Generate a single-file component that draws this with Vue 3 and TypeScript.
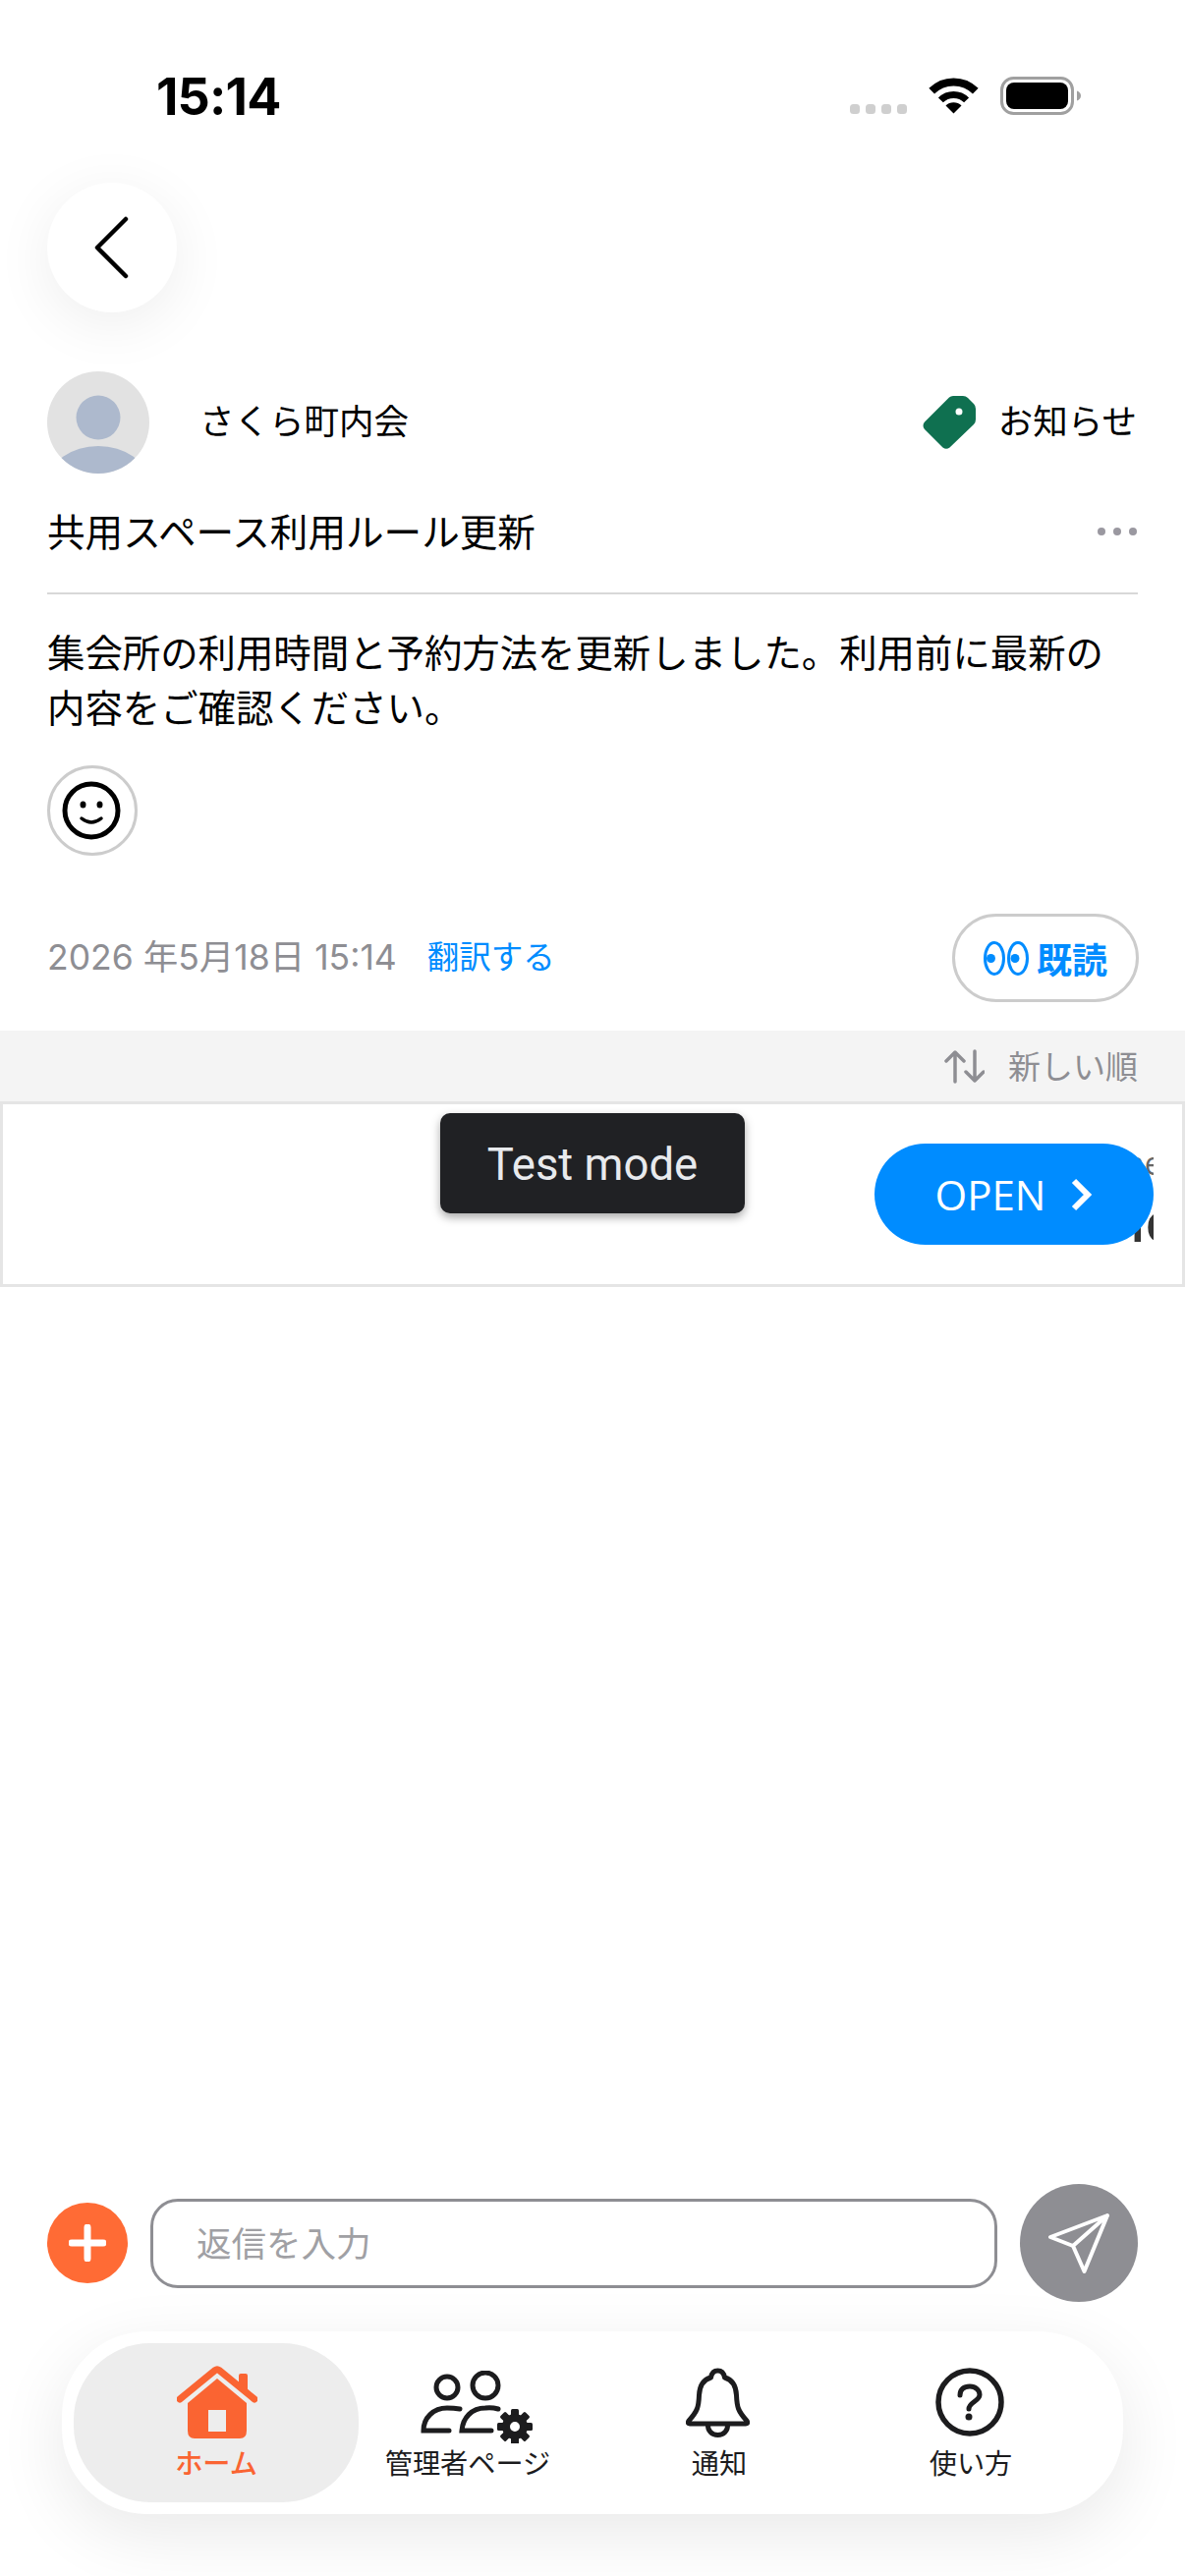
<script setup lang="ts">
interface NavItem { key: string; label: string; active?: boolean }
const nav: NavItem[] = [
  { key: 'home', label: 'ホーム', active: true },
  { key: 'admin', label: '管理者ページ' },
  { key: 'bell', label: '通知' },
  { key: 'help', label: '使い方' },
]
const gearTeeth = [0, 45, 90, 135, 180, 225, 270, 315]
</script>

<template>
  <div class="page">
    <header class="status">
      <span class="time">15:14</span>
      <div class="status-right">
        <div class="signal"><i></i><i></i><i></i><i></i></div>
        <svg class="wifi" width="51" height="37" viewBox="0 0 51 37">
          <path d="M3.2 13.7A31.5 31.5 0 0 1 47.8 13.7" fill="none" stroke="#000" stroke-width="8" />
          <path d="M12.4 22.9A18.5 18.5 0 0 1 38.6 22.9" fill="none" stroke="#000" stroke-width="7" />
          <path d="M25.5 36.5L17.5 28.5A11.3 11.3 0 0 1 33.5 28.5Z" fill="#000" />
        </svg>
        <svg class="battery" width="82" height="39" viewBox="0 0 82 39">
          <rect x="1.5" y="1.5" width="72" height="36" rx="12" fill="#fff" stroke="#a0a0a0" stroke-width="3" />
          <rect x="6" y="6" width="63" height="27" rx="8" fill="#000" />
          <path d="M78 14.5C80.5 15.5 82 17 82 19.5C82 22 80.5 23.5 78 24.5Z" fill="#a0a0a0" />
        </svg>
      </div>
    </header>

    <button class="back" type="button" aria-label="戻る">
      <svg width="36" height="64" viewBox="0 0 36 64">
        <path d="M33 3L4 32L33 61" fill="none" stroke="#000" stroke-width="4.5" stroke-linecap="round" stroke-linejoin="round" />
      </svg>
    </button>

    <section class="post">
      <div class="author-row">
        <svg class="avatar" width="104" height="104" viewBox="0 0 104 104">
          <defs><clipPath id="avatar-clip"><circle cx="52" cy="52" r="52" /></clipPath></defs>
          <g clip-path="url(#avatar-clip)">
            <rect width="104" height="104" fill="#e2e2e2" />
            <circle cx="52" cy="47" r="22.5" fill="#adb9cd" />
            <ellipse cx="52" cy="112" rx="50" ry="36" fill="#adb9cd" />
          </g>
        </svg>
        <span class="author">さくら町内会</span>
        <div class="tag">
          <svg width="54" height="54" viewBox="0 0 54 54">
            <path fill-rule="evenodd" fill="#0f7050" d="M27 1.5Q28.5 0 31 0H41Q44 0 46 2L52 8Q54 10 54 13V24Q54 27 52 29L27.500 52.500Q24 55 20.500 52.500L2 34Q-1 30 2 26.500ZM37 12.500A3.500 3.500 0 1 0 37 19.500A3.500 3.500 0 1 0 37 12.500Z" />
          </svg>
          <span>お知らせ</span>
        </div>
      </div>

      <div class="title-row">
        <h1 class="title">共用スペース利用ルール更新</h1>
        <div class="more"><i></i><i></i><i></i></div>
      </div>

      <p class="body">集会所の利用時間と予約方法を更新しました。利用前に最新の内容をご確認ください。</p>

      <button class="react" type="button" aria-label="リアクション">
        <svg width="60" height="60" viewBox="0 0 60 60">
          <circle cx="30" cy="30" r="27" fill="none" stroke="#000" stroke-width="5" />
          <ellipse cx="21.500" cy="24" rx="3" ry="3.500" fill="#000" />
          <ellipse cx="38.500" cy="24" rx="3" ry="3.500" fill="#000" />
          <path d="M20 38Q30 46 40 38" fill="none" stroke="#000" stroke-width="3.500" stroke-linecap="round" />
        </svg>
      </button>

      <div class="meta-row">
        <span class="date">2026 年5月18日 15:14</span>
        <span class="translate">翻訳する</span>
        <div class="read">
          <svg width="46" height="35" viewBox="0 0 46 35">
            <ellipse cx="11" cy="17.500" rx="9.500" ry="16" fill="none" stroke="#008cff" stroke-width="3" />
            <ellipse cx="35" cy="17.500" rx="9.500" ry="16" fill="none" stroke="#008cff" stroke-width="3" />
            <circle cx="7.500" cy="17.500" r="4.500" fill="#008cff" />
            <circle cx="32" cy="17.500" r="4.500" fill="#008cff" />
          </svg>
          <span>既読</span>
        </div>
      </div>
    </section>

    <div class="sort-band">
      <svg width="41" height="35" viewBox="0 0 41 35">
        <path d="M11 33V3M2 12L11 3L20 12M31 2V32M22 23L31 32L40 23" fill="none" stroke="#8e8e93" stroke-width="3.500" stroke-linecap="round" stroke-linejoin="round" />
      </svg>
      <span class="sort-label">新しい順</span>
    </div>

    <div class="ad">
      <div class="ad-clip">
        <span class="ad-small">ne</span>
        <span class="ad-large">ic</span>
      </div>
      <div class="toast">Test mode</div>
      <div class="open">
        <span>OPEN</span>
        <svg width="22" height="34" viewBox="0 0 22 34">
          <path d="M3 3L17 17L3 31" fill="none" stroke="#fff" stroke-width="6" />
        </svg>
      </div>
    </div>

    <div class="spacer"></div>

    <div class="composer">
      <button class="plus" type="button" aria-label="追加">
        <svg width="38" height="38" viewBox="0 0 38 38">
          <path d="M19 3V35M3 19H35" stroke="#fff" stroke-width="7" stroke-linecap="round" />
        </svg>
      </button>
      <div class="input">返信を入力</div>
      <button class="send" type="button" aria-label="送信">
        <svg width="120" height="120" viewBox="0 0 120 120">
          <path d="M89 32L31 54L54 63L65.500 89ZM89 32L54 63" fill="none" stroke="#fff" stroke-width="4" stroke-linejoin="round" stroke-linecap="round" />
        </svg>
      </button>
    </div>

    <nav class="nav">
      <div v-for="item in nav" :key="item.key" class="nav-item" :class="{ active: item.active }">
        <div class="nav-icon">
          <svg v-if="item.key === 'home'" class="i-home" width="82" height="74" viewBox="0 0 82 74">
            <path d="M63 24V10Q63 8 65 8H70Q72 8 72 10V28Z" fill="#fa6432" />
            <path d="M3 34L39 4.500Q41 3 43 4.500L79 34" fill="none" stroke="#fa6432" stroke-width="7" stroke-linecap="round" stroke-linejoin="round" />
            <path d="M11 38L41 13L71 38V66Q71 74 64 74H18Q11 74 11 66Z" fill="#fa6432" />
            <rect x="32" y="45" width="18" height="22" fill="#ededed" />
          </svg>
          <svg v-else-if="item.key === 'admin'" class="i-admin" width="114" height="74" viewBox="0 0 114 74">
            <g fill="none" stroke="#1c1c1e" stroke-width="5">
              <circle cx="27" cy="17" r="11" />
              <circle cx="66" cy="15" r="13" />
              <path d="M40 39Q34 38 27 38C13 38 3 48 3 61H29" stroke-linecap="round" />
              <path d="M79 39Q72 37 66 38C52 38 43 48 42 61H72" stroke-linecap="round" />
            </g>
            <g transform="translate(96 57)">
              <rect v-for="a in gearTeeth" :key="a" x="-4" y="-18" width="8" height="10" rx="1.500" fill="#1c1c1e" :transform="`rotate(${a})`" />
              <circle r="9" fill="none" stroke="#1c1c1e" stroke-width="8" />
            </g>
          </svg>
          <svg v-else-if="item.key === 'bell'" class="i-bell" width="65" height="71" viewBox="0 0 65 71">
            <path d="M32.500 3C27 3 26 7 25.500 10C18 12 14 18 13.500 28C13 40 12 44 3 54Q1 57 4 57H61Q64 57 62 54C53 44 52 40 51.500 28C51 18 47 12 39.500 10C39 7 38 3 32.500 3Z" fill="none" stroke="#1c1c1e" stroke-width="5" stroke-linejoin="round" />
            <path d="M22.500 58C22 64 26.500 68.500 32.500 68.500C38.500 68.500 43 64 42.500 58" fill="none" stroke="#1c1c1e" stroke-width="5" />
          </svg>
          <svg v-else class="i-help" width="70" height="70" viewBox="0 0 70 70">
            <circle cx="35" cy="35" r="32" fill="none" stroke="#1c1c1e" stroke-width="5.500" />
            <path d="M25 28C25 22 29 19 35 19C41 19 45 23 45 27.500C45 34 34 35 34 42" fill="none" stroke="#1c1c1e" stroke-width="5" stroke-linecap="round" />
            <circle cx="34" cy="50" r="3.500" fill="#1c1c1e" />
          </svg>
        </div>
        <span class="nav-label">{{ item.label }}</span>
      </div>
    </nav>
  </div>
</template>

<style scoped>
.page {
  width: 1206px;
  height: 2622px;
  display: flex;
  flex-direction: column;
  background: #fff;
  overflow: hidden;
  font-family: "Inter", "Noto Sans CJK JP", sans-serif;
  color: #000;
}
.status {
  height: 186px;
  box-sizing: border-box;
  padding: 78px 106px 0 159px;
  display: flex;
  justify-content: space-between;
  align-items: flex-start;
}
.time {
  font-size: 52px;
  line-height: 41px;
  font-weight: 700;
  letter-spacing: -0.8px;
}
.status-right {
  display: flex;
  align-items: center;
  gap: 22px;
  height: 39px;
}
.signal {
  display: flex;
  gap: 6px;
  align-self: flex-end;
  margin-bottom: 1px;
}
.signal i {
  width: 10px;
  height: 10px;
  border-radius: 3.5px;
  background: #cfcfcf;
}
.back {
  width: 132px;
  height: 132px;
  margin: 0 0 60px 48px;
  padding: 0;
  border: 0;
  border-radius: 50%;
  background: #fff;
  box-shadow: 0 12px 60px rgba(0, 0, 0, 0.07);
  display: flex;
  align-items: center;
  justify-content: center;
}
.back svg { margin-right: 2px; }
.post {
  padding: 0 48px;
  height: 671px;
  box-sizing: border-box;
  display: flex;
  flex-direction: column;
  align-items: stretch;
}
.author-row {
  display: flex;
  align-items: center;
  height: 104px;
}
.avatar { flex: none; }
.author {
  margin-left: 51px;
  font-size: 35.500px;
  line-height: 50px;
  flex: 1;
}
.tag {
  display: flex;
  align-items: center;
  gap: 23px;
  font-size: 35.500px;
  line-height: 50px;
  margin-right: 1px;
}
.title-row {
  margin-top: 32px;
  padding-bottom: 33px;
  display: flex;
  align-items: center;
  justify-content: space-between;
  border-bottom: 2px solid #d8d8d8;
}
.title {
  margin: 0;
  font-size: 38.600px;
  line-height: 56px;
  font-weight: 400;
}
.more { display: flex; gap: 8px; margin-right: 1px; margin-top: -2px; }
.more i {
  width: 8px;
  height: 8px;
  border-radius: 50%;
  background: #9a98a0;
}
.body {
  margin: 32px 0 0;
  font-size: 38.400px;
  line-height: 56px;
  width: 1110px;
}
.react {
  width: 92px;
  height: 92px;
  margin-top: 30px;
  padding: 0 2px 0 0;
  box-sizing: border-box;
  border: 3px solid #cccccc;
  border-radius: 50%;
  background: #fff;
  display: flex;
  align-items: center;
  justify-content: center;
  align-self: flex-start;
}
.meta-row {
  margin-top: 59px;
  display: flex;
  align-items: center;
  height: 90px;
}
.date {
  font-size: 35.500px;
  line-height: 48px;
  color: #8e8e93;
}
.translate {
  margin-left: 31px;
  font-size: 32.500px;
  line-height: 48px;
  color: #008cff;
}
.read {
  margin-left: auto;
  width: 190px;
  height: 90px;
  margin-right: -1px;
  box-sizing: border-box;
  border: 3px solid #cccccc;
  border-radius: 45px;
  display: flex;
  align-items: center;
  justify-content: center;
  gap: 8px;
  color: #008cff;
  font-size: 36px;
  font-weight: 700;
}
.sort-band {
  height: 72px;
  box-sizing: border-box;
  padding: 0 48px 0 0;
  background: #f4f4f4;
  display: flex;
  align-items: center;
  justify-content: flex-end;
  gap: 24px;
  color: #8e8e93;
  font-size: 33px;
}
.sort-label { margin-bottom: 3px; }
.ad {
  position: relative;
  height: 189px;
  box-sizing: border-box;
  border: 3px solid #e5e5e5;
  background: #fff;
}
.ad-clip {
  position: absolute;
  left: 1097px;
  top: 0;
  width: 74px;
  height: 183px;
  overflow: hidden;
}
.ad-small {
  position: absolute;
  left: 45px;
  top: 40px;
  font-size: 32px;
  line-height: 40px;
  color: #666;
  font-family: "Open Sans", sans-serif;
}
.ad-large {
  position: absolute;
  left: 50px;
  top: 88px;
  font-size: 56px;
  line-height: 60px;
  color: #333;
  font-weight: 600;
  font-family: "Open Sans", sans-serif;
}
.toast {
  position: absolute;
  left: 445px;
  top: 9px;
  width: 310px;
  height: 102px;
  box-sizing: border-box;
  padding-top: 2px;
  border-radius: 10px;
  background: #202124;
  color: #e8eaed;
  font-family: "Roboto", sans-serif;
  font-size: 45.500px;
  display: flex;
  align-items: center;
  justify-content: center;
  box-shadow: 0 4px 10px rgba(0, 0, 0, 0.35);
}
.open {
  position: absolute;
  left: 887px;
  top: 40px;
  width: 284px;
  height: 103px;
  border-radius: 52px;
  background: #008cff;
  color: #fff;
  font-family: "Open Sans", sans-serif;
  font-size: 42px;
  display: flex;
  align-items: center;
  justify-content: center;
  gap: 26px;
}
.spacer { flex: 1; }
.composer {
  height: 120px;
  margin-bottom: 30px;
  padding: 0 48px;
  display: flex;
  align-items: center;
}
.plus {
  flex: none;
  width: 82px;
  height: 82px;
  margin-right: 23px;
  padding: 0;
  border: 0;
  border-radius: 50%;
  background: #ff6b35;
  display: flex;
  align-items: center;
  justify-content: center;
}
.input {
  flex: 1;
  height: 91px;
  box-sizing: border-box;
  border: 3px solid #8e8e93;
  border-radius: 28px;
  padding: 0 0 4px 44px;
  display: flex;
  align-items: center;
  font-size: 35.500px;
  color: #a0a0a4;
}
.send {
  flex: none;
  width: 120px;
  height: 120px;
  margin-left: 23px;
  padding: 0;
  border: 0;
  border-radius: 50%;
  background: #8e8e93;
}
.send svg { display: block; }
.nav {
  width: 1080px;
  height: 186px;
  margin: 0 0 63px 63px;
  padding: 12px 27px 12px 29px;
  box-sizing: border-box;
  border-radius: 86px;
  background: #fff;
  box-shadow: 0 20px 70px rgba(0, 0, 0, 0.09);
  display: grid;
  grid-template-columns: repeat(4, 256px);
}
.nav-item {
  min-width: 0;
  display: flex;
  flex-direction: column;
  align-items: center;
  padding-top: 20px;
  color: #1c1c1e;
}
.nav-item.active {
  margin: 0 -17px;
  border-radius: 78px;
  background: #ededed;
  color: #fa6432;
}
.nav-icon {
  height: 85px;
  display: flex;
  align-items: flex-start;
  justify-content: center;
}
.i-home { margin-top: 3px; margin-left: 2px; }
.i-admin { margin-top: 8px; margin-left: 18px; }
.i-bell { margin-top: 5px; margin-right: 3px; }
.i-help { margin-top: 5px; margin-right: 2px; }
.nav-label {
  font-size: 28.200px;
  line-height: 36px;
  white-space: nowrap;
}
.active .nav-label { font-weight: 500; }
</style>

<style>
html, body { background: #fff; }
</style>
